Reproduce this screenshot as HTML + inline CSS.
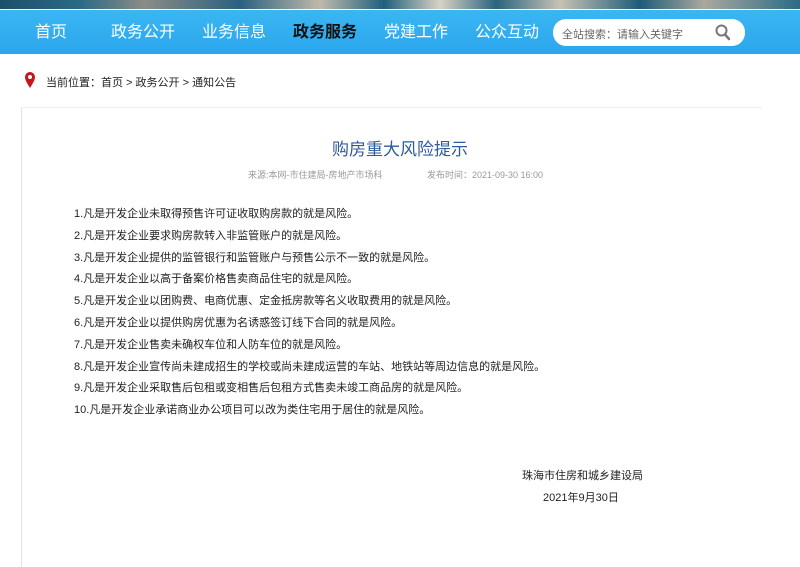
<!DOCTYPE html>
<html><head><meta charset="utf-8"><style>
*{margin:0;padding:0;box-sizing:border-box}
body{width:800px;height:553px;overflow:hidden;background:#fff;font-family:"Liberation Sans","Noto Sans CJK SC",sans-serif;position:relative}
.banner{position:absolute;left:0;top:0;width:800px;height:9px;background:linear-gradient(90deg,#1d4f6a 0%,#2b6a86 10%,#8a8c86 18%,#2a6180 30%,#bfb9aa 40%,#20607e 48%,#d8d2c4 55%,#2a6480 62%,#c7c2b3 70%,#1e5c7a 80%,#a9a89d 88%,#2b6b87 100%)}
.white{position:absolute;top:9px;left:0;width:800px;height:1px;background:#fff}
.nav{position:absolute;top:10px;left:0;width:800px;height:44px;background:linear-gradient(#3bb6f3,#2aa6ec)}
.nav span{position:absolute;top:13px;color:#fff;font-size:16px;line-height:20px}
.search{position:absolute;left:553px;top:9px;width:192px;height:27px;background:#fff;border-radius:13px}
.search span{position:absolute;left:9px;top:6px;font-size:11px;color:#666}
.crumb{position:absolute;left:46px;top:74px;font-size:11px;color:#222}
.box{position:absolute;left:21px;top:107px;width:741px;height:460px;border-left:1px solid #e2e2e2;border-top:1px solid #eee}
h1{position:absolute;left:0;width:800px;top:135px;text-align:center;font-size:17px;font-weight:normal;color:#2f5b9b}
.meta{position:absolute;top:168px;font-size:9px;color:#999}
.lines{position:absolute;left:74px;top:204px;font-size:11px;color:#222;line-height:21.8px}
.sig{position:absolute;font-size:11px;color:#222}
</style></head><body>
<div class="banner"></div><div class="white"></div>
<div class="nav">
<span style="left:35px">首页</span>
<span style="left:111px">政务公开</span>
<span style="left:202px">业务信息</span>
<span style="left:293px;color:#111;font-weight:bold">政务服务</span>
<span style="left:384px">党建工作</span>
<span style="left:475px">公众互动</span>
<div class="search"><span>全站搜索：请输入关键字</span>
<svg style="position:absolute;left:162px;top:5px" width="16" height="17" viewBox="0 0 16 17"><circle cx="6.5" cy="6.5" r="5" fill="none" stroke="#777" stroke-width="2"/><path d="M10 10.5 L14 15" stroke="#777" stroke-width="2.5" stroke-linecap="round"/></svg></div>
</div>
<svg style="position:absolute;left:24px;top:71px" width="12" height="18" viewBox="0 0 12 18"><path d="M6 17 C3 12 1 9 1 6 A5 5 0 0 1 11 6 C11 9 9 12 6 17Z" fill="#c4161c"/><circle cx="6" cy="6" r="2" fill="#fff"/></svg>
<div class="crumb">当前位置：首页 &gt; 政务公开 &gt; 通知公告</div>
<div class="box"></div>
<h1>购房重大风险提示</h1>
<div class="meta" style="left:248px">来源:本网-市住建局-房地产市场科</div>
<div class="meta" style="left:427px">发布时间：2021-09-30 16:00</div>
<div class="lines">
1.凡是开发企业未取得预售许可证收取购房款的就是风险。<br>
2.凡是开发企业要求购房款转入非监管账户的就是风险。<br>
3.凡是开发企业提供的监管银行和监管账户与预售公示不一致的就是风险。<br>
4.凡是开发企业以高于备案价格售卖商品住宅的就是风险。<br>
5.凡是开发企业以团购费、电商优惠、定金抵房款等名义收取费用的就是风险。<br>
6.凡是开发企业以提供购房优惠为名诱惑签订线下合同的就是风险。<br>
7.凡是开发企业售卖未确权车位和人防车位的就是风险。<br>
8.凡是开发企业宣传尚未建成招生的学校或尚未建成运营的车站、地铁站等周边信息的就是风险。<br>
9.凡是开发企业采取售后包租或变相售后包租方式售卖未竣工商品房的就是风险。<br>
10.凡是开发企业承诺商业办公项目可以改为类住宅用于居住的就是风险。
</div>
<div class="sig" style="left:522px;top:467px">珠海市住房和城乡建设局</div>
<div class="sig" style="left:543px;top:489px">2021年9月30日</div>
</body></html>
